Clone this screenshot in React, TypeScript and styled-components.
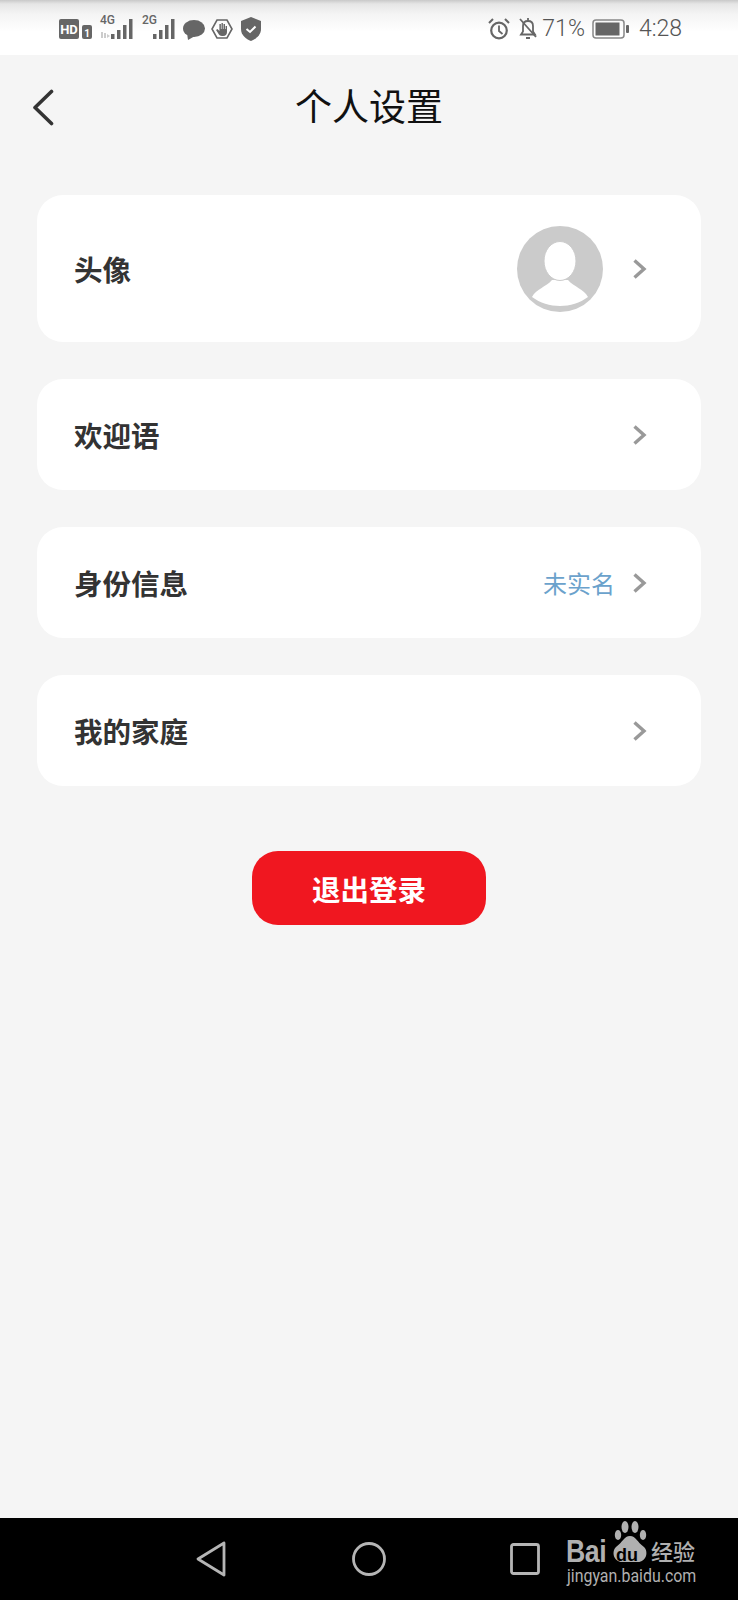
import React from 'react';
import styled, { createGlobalStyle } from 'styled-components';

const GlobalStyle = createGlobalStyle`
  html, body {
    margin: 0;
    padding: 0;
    background: #f5f5f5;
    font-family: "Noto Sans CJK SC", "Noto Sans", sans-serif;
  }
`;

const Page = styled.div`
  width: 738px;
  height: 1600px;
  display: flex;
  flex-direction: column;
  overflow: hidden;
  background: #f5f5f5;
`;

const StatusBar = styled.div`
  box-sizing: border-box;
  height: 55px;
  flex: none;
  display: flex;
  align-items: center;
  justify-content: space-between;
  padding: 2px 56px 0 59px;
  background: linear-gradient(#c9c9c9 0, #e6e6e6 4px, #f4f4f4 14px, #fff 32px);
  color: #666;
`;

const StatusGroup = styled.div<{ $gap: number }>`
  display: flex;
  align-items: center;
  gap: ${(props) => props.$gap}px;
`;

const StatusIcon = styled.svg<{ $shift?: number; $drop?: number }>`
  display: block;
  flex: none;
  margin-left: ${(props) => props.$shift ?? 0}px;
  margin-top: ${(props) => props.$drop ?? 0}px;
`;

const StatusText = styled.span<{ $shift?: number }>`
  margin-left: ${(props) => props.$shift ?? 0}px;
  font-family: "Roboto", sans-serif;
  font-size: 23px;
  font-weight: 300;
  line-height: 28px;
  color: #555;
`;

const SignalWrap = styled.div`
  position: relative;
  width: 35px;
  height: 24px;
  flex: none;
`;

const NetLabel = styled.span`
  position: absolute;
  left: 1px;
  top: -3px;
  font-family: "Roboto", sans-serif;
  font-size: 12px;
  font-weight: 500;
  line-height: 13px;
  color: #666;
`;

const BarsIcon = styled.svg`
  position: absolute;
  left: 0;
  top: 0;
`;

const Header = styled.div`
  box-sizing: border-box;
  position: relative;
  height: 105px;
  flex: none;
  display: flex;
  align-items: center;
  justify-content: center;
  padding-bottom: 5px;
`;

const BackButton = styled.div`
  position: absolute;
  left: 32px;
  top: 34px;
  display: flex;
`;

const Title = styled.h1`
  margin: 0;
  font-size: 37px;
  font-weight: 400;
  line-height: 44px;
  color: #111;
`;

const Content = styled.div`
  flex: 1;
  display: flex;
  flex-direction: column;
  padding: 35px 37px 0;
`;

const CardList = styled.div`
  display: flex;
  flex-direction: column;
  gap: 37px;
`;

const Card = styled.div<{ $tall?: boolean }>`
  height: ${(props) => (props.$tall ? 147 : 111)}px;
  display: flex;
  align-items: center;
  justify-content: space-between;
  padding: 0 54px 0 37px;
  background: #fff;
  border-radius: 26px;
`;

const CardLabel = styled.span`
  font-size: 28.5px;
  font-weight: 700;
  line-height: 36px;
  color: #333;
`;

const CardRight = styled.div`
  display: flex;
  align-items: center;
`;

const StatusNote = styled.span`
  margin-right: 17px;
  font-size: 24px;
  line-height: 32px;
  color: #6ba2cc;
`;

const AvatarWrap = styled.div`
  display: flex;
  margin-right: 29px;
`;

const Chevron = styled.svg`
  display: block;
`;

const LogoutButton = styled.button`
  align-self: center;
  width: 234px;
  height: 74px;
  margin-top: 65px;
  padding: 0;
  border: none;
  border-radius: 26px;
  background: #f01720;
  color: #fff;
  font-family: inherit;
  font-size: 28.5px;
  font-weight: 700;
`;

const NavBar = styled.div`
  position: relative;
  height: 82px;
  flex: none;
  display: flex;
  align-items: center;
  gap: 126px;
  padding: 0 0 0 196px;
  background: #000;
`;

const NavIcon = styled.svg<{ $shift?: number }>`
  display: block;
  flex: none;
  margin-left: ${(props) => props.$shift ?? 0}px;
`;

const Watermark = styled.div`
  position: absolute;
  left: 566px;
  top: 3px;
  width: 132px;
  height: 66px;
  color: #b0b0b0;
`;

const BaiText = styled.span`
  position: absolute;
  left: 0;
  top: 14px;
  font-family: "Liberation Sans", sans-serif;
  font-size: 31px;
  font-weight: 700;
  line-height: 34px;
  letter-spacing: -0.5px;
  transform: scaleX(0.86);
  transform-origin: left center;
`;

const Paw = styled.svg`
  position: absolute;
  left: 45px;
  top: 0;
`;

const DuText = styled.span`
  position: absolute;
  left: 50px;
  top: 25px;
  font-family: "Liberation Sans", sans-serif;
  font-size: 18px;
  font-weight: 700;
  line-height: 18px;
  color: #000;
`;

const JingText = styled.span`
  position: absolute;
  left: 85px;
  top: 16px;
  font-size: 22px;
  font-weight: 500;
  line-height: 26px;
  white-space: nowrap;
`;

const SiteText = styled.span`
  position: absolute;
  left: 1px;
  top: 45px;
  font-family: "Roboto", sans-serif;
  font-size: 17.5px;
  line-height: 20px;
  white-space: nowrap;
  transform: scaleX(0.91);
  transform-origin: left center;
`;

const ChevronRight = () => (
  <Chevron width="15" height="22" viewBox="0 0 15 22">
    <path d="M2.500 2.500 L12 11 L2.500 19.500" fill="none" stroke="#999" strokeWidth="3.400" />
  </Chevron>
);

const Bars = ({ dim }: { dim?: boolean }) => (
  <BarsIcon width="35" height="24" viewBox="0 0 35 24">
    {dim && <path d="M2 15h2v6H2zM5 16h2v5H5zM8 17l3 2-3 2z" fill="#ccc" />}
    <rect x="12" y="17" width="3.500" height="5" fill="#666" />
    <rect x="18" y="13" width="3.500" height="9" fill="#666" />
    <rect x="24" y="8" width="3.500" height="14" fill="#666" />
    <rect x="30" y="2" width="3.500" height="20" fill="#666" />
  </BarsIcon>
);

function LeftStatus() {
  return (
    <StatusGroup $gap={7}>
      <StatusIcon width="20" height="20" viewBox="0 0 20 20">
        <rect width="20" height="20" rx="2" fill="#666" />
        <text x="10" y="15" textAnchor="middle" fontSize="13" fontWeight="700" fontFamily="Roboto, sans-serif" fill="#fff">HD</text>
      </StatusIcon>
      <StatusIcon width="10" height="14" viewBox="0 0 10 14" $shift={-4} $drop={6}>
        <rect width="10" height="14" rx="2" fill="#666" />
        <text x="5" y="11.500" textAnchor="middle" fontSize="10" fontWeight="700" fontFamily="Roboto, sans-serif" fill="#fff">1</text>
      </StatusIcon>
      <SignalWrap>
        <NetLabel>4G</NetLabel>
        <Bars dim />
      </SignalWrap>
      <SignalWrap>
        <NetLabel>2G</NetLabel>
        <Bars />
      </SignalWrap>
      <StatusIcon width="22" height="20" viewBox="0 0 22 20" $drop={2}>
        <ellipse cx="11" cy="8.500" rx="11" ry="8.500" fill="#666" />
        <path d="M4 13 L5 20 L12 16 Z" fill="#666" />
      </StatusIcon>
      <StatusIcon width="22" height="22" viewBox="0 0 22 22" $shift={-1}>
        <path d="M6 2h10l5 9-5 9H6l-5-9z" fill="none" stroke="#666" strokeWidth="1.600" />
        <path d="M5 12l2 3c1 2 2 3 4 3h1c3 0 4-2 4-4V8h-1.400v3h-.6V6h-1.500v5h-.6V5H10.500v6h-.6V6H8.400v7L6.500 11z" fill="#666" />
      </StatusIcon>
      <StatusIcon width="20" height="24" viewBox="0 0 20 24" $shift={1}>
        <path d="M10 0 L20 4 V12 C20 18 15 22 10 24 C5 22 0 18 0 12 V4 Z" fill="#666" />
        <path d="M5.500 12 L9 15 L14.500 9.500" fill="none" stroke="#fff" strokeWidth="2" />
      </StatusIcon>
    </StatusGroup>
  );
}

function RightStatus() {
  return (
    <StatusGroup $gap={7}>
      <StatusIcon width="22" height="22" viewBox="0 0 22 22">
        <circle cx="11" cy="12.500" r="7.800" fill="none" stroke="#666" strokeWidth="2.200" />
        <path d="M11 7.500V13l3.500 3" fill="none" stroke="#666" strokeWidth="1.800" />
        <path d="M1 5l4-4M21 5l-4-4" stroke="#666" strokeWidth="2" />
      </StatusIcon>
      <StatusIcon width="20" height="23" viewBox="0 0 20 23" $shift={1}>
        <path d="M3 17.500h14l-2-3V9c0-3-2-5-5-5S5 6 5 9v5.500z" fill="none" stroke="#666" strokeWidth="1.800" />
        <path d="M8 21h4M10 1v3M2 2l16 18" stroke="#666" strokeWidth="1.800" />
      </StatusIcon>
      <StatusText $shift={-3}>71%</StatusText>
      <StatusIcon width="37" height="20" viewBox="0 0 37 20">
        <rect x="1" y="1" width="31" height="18" rx="3" fill="none" stroke="#888" strokeWidth="1.500" />
        <rect x="3.500" y="3.500" width="24" height="13" fill="#666" />
        <rect x="34" y="6" width="3" height="8" rx="1" fill="#666" />
      </StatusIcon>
      <StatusText $shift={3}>4:28</StatusText>
    </StatusGroup>
  );
}

const rows = [
  { label: '欢迎语' },
  { label: '身份信息', note: '未实名' },
  { label: '我的家庭' },
];

export default function App() {
  return (
    <Page>
      <GlobalStyle />
      <StatusBar>
        <LeftStatus />
        <RightStatus />
      </StatusBar>
      <Header>
        <BackButton>
          <svg width="22" height="37" viewBox="0 0 22 37">
            <path d="M19.500 2.500 L3 18.500 L19.500 34.500" fill="none" stroke="#333" strokeWidth="3.600" strokeLinecap="round" strokeLinejoin="round" />
          </svg>
        </BackButton>
        <Title>个人设置</Title>
      </Header>
      <Content>
        <CardList>
          <Card $tall>
            <CardLabel>头像</CardLabel>
            <CardRight>
              <AvatarWrap>
                <svg width="86" height="86" viewBox="0 0 86 86">
                  <circle cx="43" cy="43" r="43" fill="#cbcbcb" />
                  <path d="M15 71 C19 63 29 61 35 54 L51 54 C57 61 67 63 71 71 C63 77 53 80 43 80 C33 80 23 77 15 71 Z" fill="#fff" />
                  <ellipse cx="43" cy="35" rx="16" ry="19.500" fill="#fff" stroke="#cbcbcb" strokeWidth="1" />
                </svg>
              </AvatarWrap>
              <ChevronRight />
            </CardRight>
          </Card>
          {rows.map((row) => (
            <Card key={row.label}>
              <CardLabel>{row.label}</CardLabel>
              <CardRight>
                {row.note && <StatusNote>{row.note}</StatusNote>}
                <ChevronRight />
              </CardRight>
            </Card>
          ))}
        </CardList>
        <LogoutButton>退出登录</LogoutButton>
      </Content>
      <NavBar>
        <NavIcon width="30" height="36" viewBox="0 0 30 36">
          <path d="M28 2 L2 18 L28 34 Z" fill="none" stroke="#b5b5b5" strokeWidth="2.800" strokeLinejoin="round" />
        </NavIcon>
        <NavIcon width="34" height="36" viewBox="0 0 34 36">
          <circle cx="17" cy="18" r="15.500" fill="none" stroke="#b5b5b5" strokeWidth="2.800" />
        </NavIcon>
        <NavIcon width="30" height="32" viewBox="0 0 30 32" $shift={-2}>
          <rect x="1.500" y="1.500" width="27" height="29" rx="2" fill="none" stroke="#b5b5b5" strokeWidth="2.800" />
        </NavIcon>
        <Watermark>
          <BaiText>Bai</BaiText>
          <Paw width="38" height="42" viewBox="0 0 38 42">
            <ellipse cx="7" cy="14" rx="3.200" ry="5" fill="#b0b0b0" />
            <ellipse cx="14" cy="6" rx="3.500" ry="6" fill="#b0b0b0" />
            <ellipse cx="24" cy="6" rx="3.500" ry="6" fill="#b0b0b0" />
            <ellipse cx="32" cy="14" rx="3.200" ry="5" fill="#b0b0b0" />
            <path d="M19 15 C25 15 26 21 33 26 C38 31 35 41 27 41 L11 41 C3 41 0 31 5 26 C12 21 13 15 19 15 Z" fill="#b0b0b0" />
          </Paw>
          <DuText>du</DuText>
          <JingText>经验</JingText>
          <SiteText>jingyan.baidu.com</SiteText>
        </Watermark>
      </NavBar>
    </Page>
  );
}
